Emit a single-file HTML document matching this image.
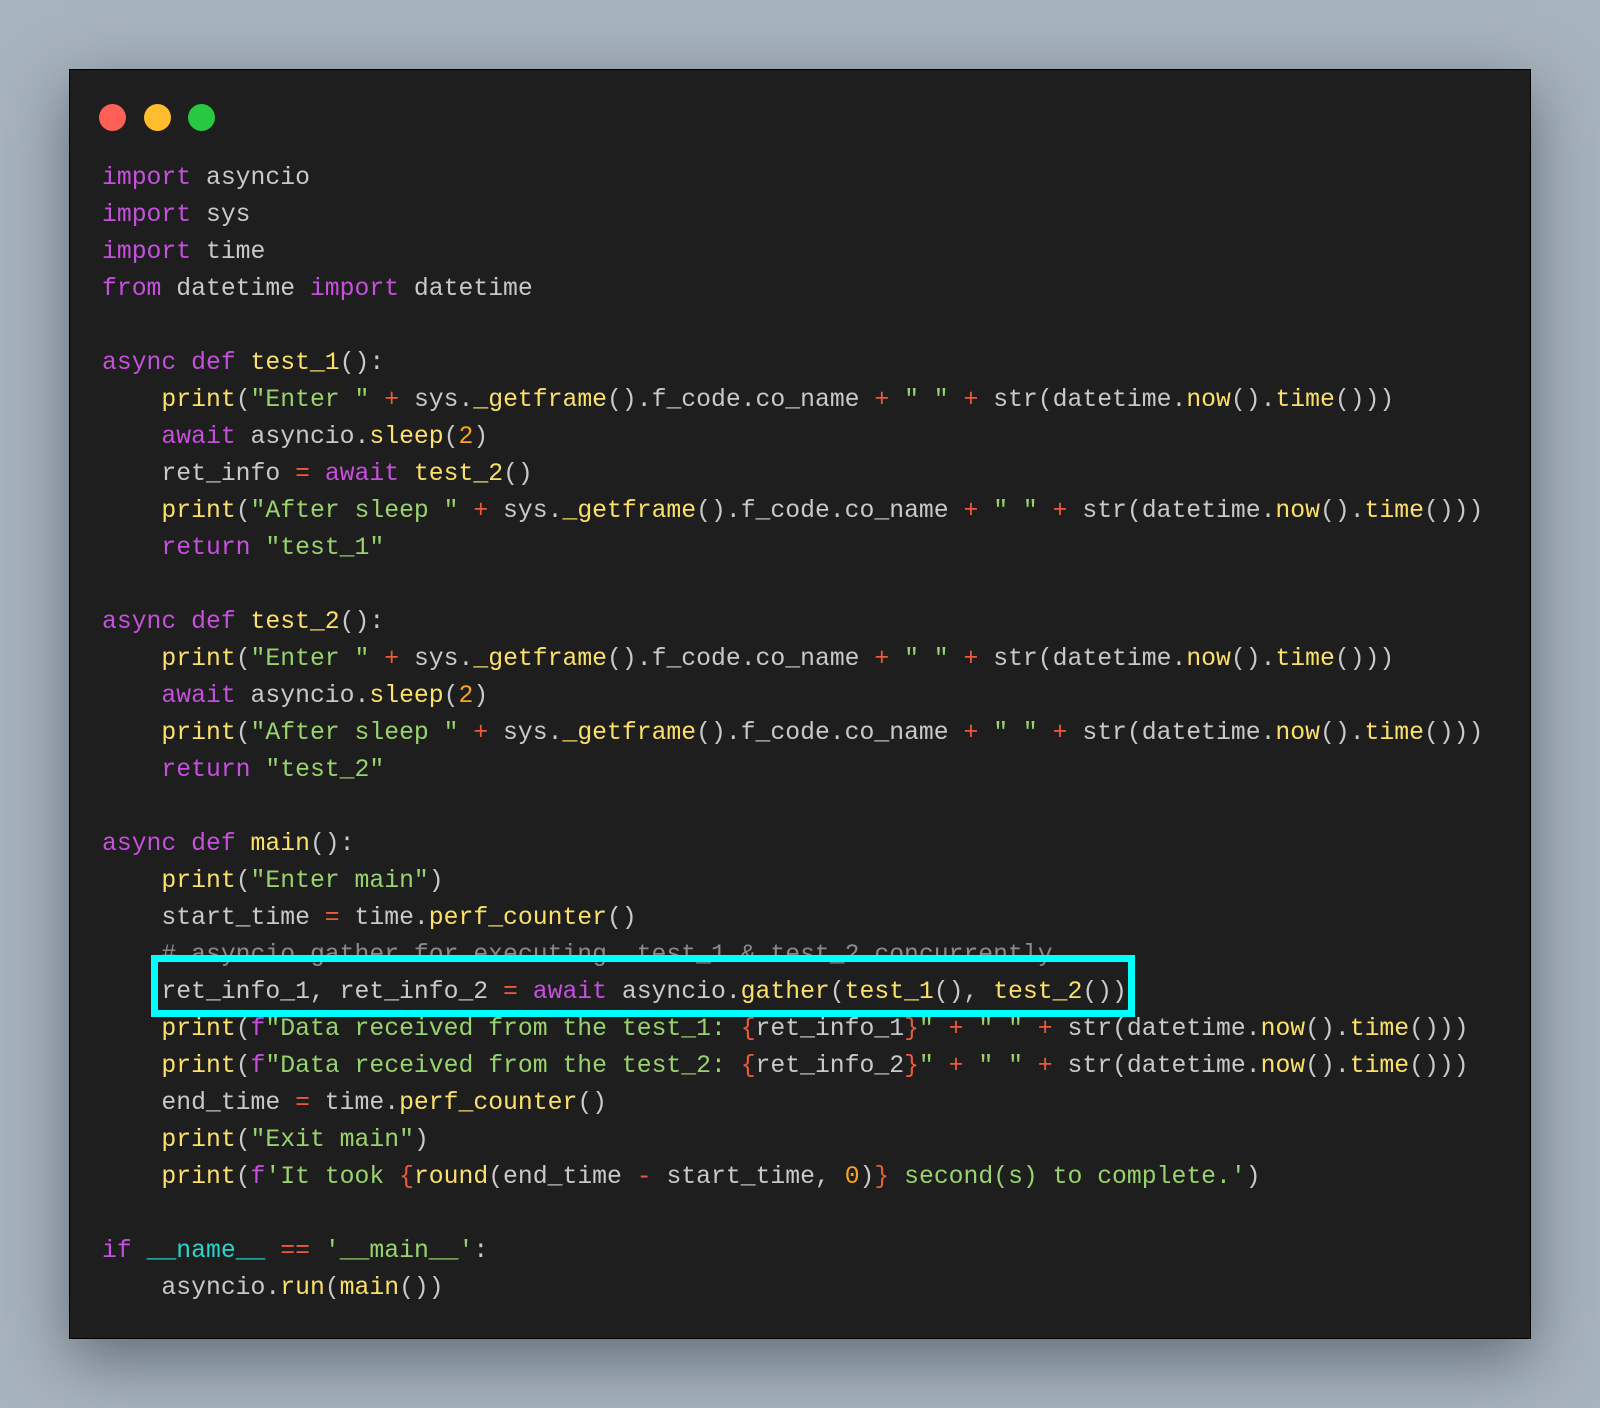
<!DOCTYPE html>
<html><head><meta charset="utf-8"><style>
html,body{margin:0;padding:0;width:1600px;height:1408px;overflow:hidden;background:#a7b3bd;}
.win{position:absolute;left:69px;top:69px;width:1460px;height:1268px;background:#1e1e1e;border:1px solid #000;box-shadow:0 20px 60px rgba(40,50,60,.55);}
.dot{position:absolute;top:104px;width:27px;height:27px;border-radius:50%;}
pre{position:absolute;left:102px;top:159.5px;margin:0;font-family:"Liberation Mono",monospace;font-size:24.75px;line-height:37.03px;color:#c9c9c9;}
.k{color:#c650de}.f{color:#fbe06a}.s{color:#98d36e}.o{color:#ec5a3c}.n{color:#f7a51f}.c{color:#8a8a8a}.m{color:#2ad4c8}
.box{position:absolute;left:151px;top:955px;width:970px;height:48px;border:7px solid #00ffff;}
</style></head><body>
<div class="win"></div>
<div class="dot" style="left:99px;background:#fe5f57"></div>
<div class="dot" style="left:144px;background:#febc2e"></div>
<div class="dot" style="left:188px;background:#28c840"></div>
<pre><span class="k">import</span> asyncio
<span class="k">import</span> sys
<span class="k">import</span> time
<span class="k">from</span> datetime <span class="k">import</span> datetime

<span class="k">async def</span> <span class="f">test_1</span>():
    <span class="f">print</span>(<span class="s">"Enter "</span> <span class="o">+</span> sys.<span class="f">_getframe</span>().f_code.co_name <span class="o">+</span> <span class="s">" "</span> <span class="o">+</span> str(datetime.<span class="f">now</span>().<span class="f">time</span>()))
    <span class="k">await</span> asyncio.<span class="f">sleep</span>(<span class="n">2</span>)
    ret_info <span class="o">=</span> <span class="k">await</span> <span class="f">test_2</span>()
    <span class="f">print</span>(<span class="s">"After sleep "</span> <span class="o">+</span> sys.<span class="f">_getframe</span>().f_code.co_name <span class="o">+</span> <span class="s">" "</span> <span class="o">+</span> str(datetime.<span class="f">now</span>().<span class="f">time</span>()))
    <span class="k">return</span> <span class="s">"test_1"</span>

<span class="k">async def</span> <span class="f">test_2</span>():
    <span class="f">print</span>(<span class="s">"Enter "</span> <span class="o">+</span> sys.<span class="f">_getframe</span>().f_code.co_name <span class="o">+</span> <span class="s">" "</span> <span class="o">+</span> str(datetime.<span class="f">now</span>().<span class="f">time</span>()))
    <span class="k">await</span> asyncio.<span class="f">sleep</span>(<span class="n">2</span>)
    <span class="f">print</span>(<span class="s">"After sleep "</span> <span class="o">+</span> sys.<span class="f">_getframe</span>().f_code.co_name <span class="o">+</span> <span class="s">" "</span> <span class="o">+</span> str(datetime.<span class="f">now</span>().<span class="f">time</span>()))
    <span class="k">return</span> <span class="s">"test_2"</span>

<span class="k">async def</span> <span class="f">main</span>():
    <span class="f">print</span>(<span class="s">"Enter main"</span>)
    start_time <span class="o">=</span> time.<span class="f">perf_counter</span>()
    <span class="c"># asyncio.gather for executing  test_1 &amp; test_2 concurrently</span>
    ret_info_1, ret_info_2 <span class="o">=</span> <span class="k">await</span> asyncio.<span class="f">gather</span>(<span class="f">test_1</span>(), <span class="f">test_2</span>())
    <span class="f">print</span>(<span class="k">f</span><span class="s">"Data received from the test_1: </span><span class="o">{</span>ret_info_1<span class="o">}</span><span class="s">"</span> <span class="o">+</span> <span class="s">" "</span> <span class="o">+</span> str(datetime.<span class="f">now</span>().<span class="f">time</span>()))
    <span class="f">print</span>(<span class="k">f</span><span class="s">"Data received from the test_2: </span><span class="o">{</span>ret_info_2<span class="o">}</span><span class="s">"</span> <span class="o">+</span> <span class="s">" "</span> <span class="o">+</span> str(datetime.<span class="f">now</span>().<span class="f">time</span>()))
    end_time <span class="o">=</span> time.<span class="f">perf_counter</span>()
    <span class="f">print</span>(<span class="s">"Exit main"</span>)
    <span class="f">print</span>(<span class="k">f</span><span class="s">'It took </span><span class="o">{</span><span class="f">round</span>(end_time <span class="o">-</span> start_time, <span class="n">0</span>)<span class="o">}</span><span class="s"> second(s) to complete.'</span>)

<span class="k">if</span> <span class="m">__name__</span> <span class="o">==</span> <span class="s">'__main__'</span>:
    asyncio.<span class="f">run</span>(<span class="f">main</span>())</pre>
<div class="box"></div>
</body></html>
